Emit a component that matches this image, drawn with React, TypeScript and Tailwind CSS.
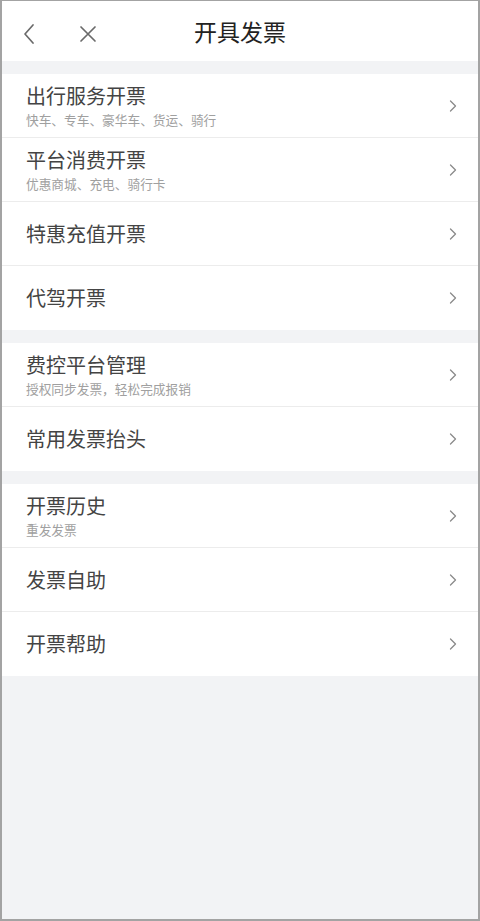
import React from "react";

type Item = { title: string; sub?: string };

const groups: Item[][] = [
  [
    { title: "出行服务开票", sub: "快车、专车、豪华车、货运、骑行" },
    { title: "平台消费开票", sub: "优惠商城、充电、骑行卡" },
    { title: "特惠充值开票" },
    { title: "代驾开票" },
  ],
  [
    { title: "费控平台管理", sub: "授权同步发票，轻松完成报销" },
    { title: "常用发票抬头" },
  ],
  [
    { title: "开票历史", sub: "重发发票" },
    { title: "发票自助" },
    { title: "开票帮助" },
  ],
];

function Chevron() {
  return (
    <svg width="10" height="14" viewBox="0 0 10 14" fill="none">
      <path d="M2.5 2l5 5-5 5" stroke="#8a8a8a" strokeWidth="1.3" strokeLinecap="round" strokeLinejoin="round" />
    </svg>
  );
}

function Row({ item, last }: { item: Item; last: boolean }) {
  return (
    <div className={`flex h-[64px] items-center justify-between pl-[24px] pr-[20px] ${last ? "" : "border-b border-[#ececec]"}`}>
      <div className="flex flex-col">
        <span className="text-[20px] leading-[26px] text-[#444]">{item.title}</span>
        {item.sub && <span className="mt-[3px] text-[12.7px] leading-[16px] text-[#a0a0a0]">{item.sub}</span>}
      </div>
      <Chevron />
    </div>
  );
}

export default function App() {
  return (
    <div
      className="flex h-[921px] w-[480px] flex-col overflow-hidden border-x-2 border-t border-b-2 border-[#a3a3a3] bg-[#f2f3f5]"
      style={{ fontFamily: '"Noto Sans CJK SC", "Noto Sans", sans-serif' }}
    >
      {/* Header */}
      <div className="relative flex h-[60px] items-center justify-center bg-white">
        <div className="absolute left-[20px] top-[22px] flex items-center gap-[43px]">
          <svg width="14" height="22" viewBox="0 0 14 22" fill="none">
            <path d="M11 2L3 11l8 9" stroke="#6a6a6a" strokeWidth="1.7" strokeLinecap="round" strokeLinejoin="round" />
          </svg>
          <svg width="18" height="18" viewBox="0 0 18 18" fill="none">
            <path d="M2 2l14 14M16 2L2 16" stroke="#6a6a6a" strokeWidth="1.7" strokeLinecap="round" />
          </svg>
        </div>
        <h1 className="text-[23px] font-normal text-[#222]">开具发票</h1>
      </div>

      {groups.map((g, gi) => (
        <div key={gi} className="mt-[13px] bg-white">
          {g.map((item, i) => (
            <Row key={item.title} item={item} last={i === g.length - 1} />
          ))}
        </div>
      ))}
    </div>
  );
}
